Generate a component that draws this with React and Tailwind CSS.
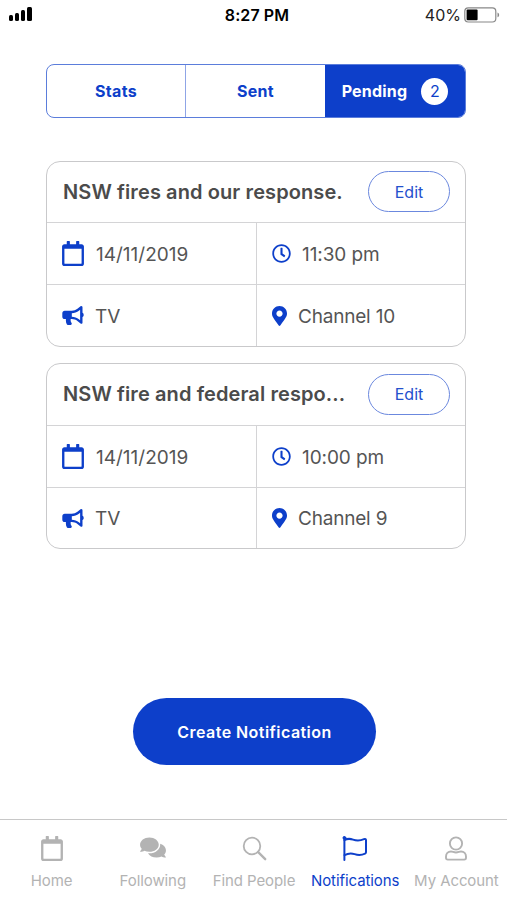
import React from "react";
import { FaRegCalendar, FaBullhorn, FaRegClock, FaMapMarkerAlt, FaComments } from "react-icons/fa";

const notifications = [
  { title: "NSW fires and our response.", headClass: "h-[61px] pb-px", date: "14/11/2019", time: "11:30 pm", medium: "TV", place: "Channel 10" },
  { title: "NSW fire and federal respo...", headClass: "h-[62px] pb-px", date: "14/11/2019", time: "10:00 pm", medium: "TV", place: "Channel 9" },
];

function StatusBar() {
  return (
    <header className="grid h-[30px] grid-cols-3 items-center pl-[9px] pr-[7px] text-[16px] leading-5 text-black">
      <div className="mb-0.5 flex h-[14px] items-end gap-[2px]">
        <span className="h-[6px] w-1 rounded-[1.5px] bg-black" />
        <span className="h-[8px] w-1 rounded-[1.5px] bg-black" />
        <span className="h-[11px] w-1 rounded-[1.5px] bg-black" />
        <span className="h-[14px] w-[5px] rounded-[1.5px] bg-black" />
      </div>
      <div className="whitespace-nowrap pl-[5px] text-center font-semibold tracking-[0.1px]">8:27 PM</div>
      <div className="flex items-center justify-end gap-[3px] text-[#222]">
        <span>40%</span>
        <svg width="36" height="16" viewBox="0 0 36 16">
          <rect x=".8" y=".8" width="31" height="14.2" rx="3.5" fill="none" stroke="#888" strokeWidth="1.2" />
          <rect x="2.6" y="2.6" width="11" height="10.6" rx="1" fill="#000" />
          <path d="M33.5 5.5c2.2.8 2.2 4 0 4.8z" fill="#888" />
        </svg>
      </div>
    </header>
  );
}

function Tabs() {
  return (
    <nav className="ml-[46px] mt-[34px] flex h-[54px] w-[420px] overflow-hidden rounded-lg border border-[#5b7ddb] text-[16px] font-bold text-[#0d3fca]">
      <button className="w-[138px] font-bold tracking-[0.3px]">Stats</button>
      <button className="w-[140px] border-l border-[#8fa5e6] font-bold tracking-[0.3px]">Sent</button>
      <button className="flex flex-1 items-center justify-center gap-[14px] bg-[#0d3fca] font-bold text-white">
        <span className="tracking-[0.2px]">Pending</span>
        <span className="flex size-[27px] items-center justify-center rounded-full bg-white text-[16px] font-normal text-[#0d3fca]">2</span>
      </button>
    </nav>
  );
}

function Card({ item }) {
  return (
    <article className="flex h-[186px] flex-col rounded-[14px] border border-[#c9c9cb] text-[19px] text-[#555]">
      <div className={`flex shrink-0 items-center justify-between border-b border-[#d4d4d6] pl-4 pr-[15px] ${item.headClass}`}>
        <h2 className="whitespace-nowrap text-[20px] font-semibold tracking-[0.1px] text-[#4b4b4b]">{item.title}</h2>
        <button className="h-[41px] w-[82px] rounded-full border border-[#6b88de] text-[16px] text-[#2450cd]">Edit</button>
      </div>
      <div className="grid flex-1 grid-cols-[210px_1fr] grid-rows-[62px_1fr]">
        <div className="flex items-center border-b border-r border-[#d4d4d6] pl-[15px]">
          <FaRegCalendar className="h-[25px] w-[22px] text-[#0d3fca]" />
          <span className="ml-3 pt-[3px]">{item.date}</span>
        </div>
        <div className="flex items-center border-b border-[#d4d4d6] pl-[15px]">
          <FaRegClock className="size-[19px] text-[#0d3fca]" />
          <span className="ml-[11px] pt-[3px] tracking-[-0.1px]">{item.time}</span>
        </div>
        <div className="flex items-center border-r border-[#d4d4d6] pl-[15px]">
          <FaBullhorn className="h-[19px] w-[22px] text-[#0d3fca]" />
          <span className="ml-[11px] pt-[3px]">{item.medium}</span>
        </div>
        <div className="flex items-center pl-[15px]">
          <FaMapMarkerAlt className="h-[20px] w-[15px] text-[#0d3fca]" />
          <span className="ml-[11px] pt-[3px] tracking-[-0.2px]">{item.place}</span>
        </div>
      </div>
    </article>
  );
}

function SearchIcon() {
  return (
    <svg width="26" height="26" viewBox="0 0 26 26" fill="none" stroke="currentColor" strokeWidth="1.8" strokeLinecap="round">
      <circle cx="11" cy="10" r="8.3" />
      <path d="m17.200 16.200 7 7" strokeWidth="2.4" />
    </svg>
  );
}

function FlagIcon() {
  return (
    <svg width="26" height="26" viewBox="0 0 26 26" fill="none" stroke="currentColor" strokeWidth="2" strokeLinejoin="round" strokeLinecap="round">
      <path d="M2.400 1.500v22.500" />
      <circle cx="2.400" cy="1.900" r="1.400" fill="currentColor" strokeWidth="1" />
      <path d="M2.400 4.100C5 2.700 8 2.500 11 3.600c4 1.400 7.500 1.100 11-.5q2-.6 2 1.200V16.300q0 .9-.9 1.300c-3.600 1.700-7 1.700-10.500.5-3.700-1.200-6.700-.8-10.100 1" />
    </svg>
  );
}

function UserIcon() {
  return (
    <svg width="24" height="26" viewBox="0 0 24 26" fill="none" stroke="currentColor" strokeWidth="1.900" strokeLinejoin="round">
      <circle cx="12" cy="7.500" r="6.100" />
      <path d="M7 15.500c1.900 0 2.600 1 5 1s3.100-1 5-1c3 0 5 2.300 5 5v1.300q0 1.800-1.800 1.800H3.800Q2 23.600 2 21.800v-1.300c0-2.700 2-5 5-5z" />
    </svg>
  );
}

const navItems = [
  { label: "Home", icon: <FaRegCalendar className="h-[25px] w-[22px]" /> },
  { label: "Following", icon: <FaComments className="mb-[3px] h-[23px] w-[26px]" /> },
  { label: "Find People", icon: <SearchIcon /> },
  { label: "Notifications", icon: <FlagIcon />, active: true },
  { label: "My Account", icon: <UserIcon /> },
];

export default function App() {
  return (
    <div className="flex h-[900px] w-[507px] flex-col overflow-hidden bg-white font-['Inter','Liberation_Sans',sans-serif]">
      <StatusBar />
      <Tabs />
      <main className="ml-[46px] mt-[43px] flex w-[420px] flex-col gap-4">
        {notifications.map((item) => <Card key={item.title} item={item} />)}
      </main>
      <button className="ml-[133px] mt-[149px] h-[67px] w-[243px] shrink-0 rounded-full bg-[#0d3fca] text-[16px] font-semibold tracking-[0.45px] text-white">
        Create Notification
      </button>
      <footer className="mt-auto grid h-[81px] grid-cols-5 border-t border-[#c8c8c8] pl-px">
        {navItems.map(({ label, icon, active }) => (
          <div key={label} className={`flex flex-col items-center pt-[15px] text-[15px] ${active ? "text-[#0d3fca]" : "text-[#b3b3b3]"}`}>
            <div className="flex h-[27px] items-center">{icon}</div>
            <span className="mt-[9px] whitespace-nowrap leading-5 tracking-[-0.08px]">{label}</span>
          </div>
        ))}
      </footer>
    </div>
  );
}
